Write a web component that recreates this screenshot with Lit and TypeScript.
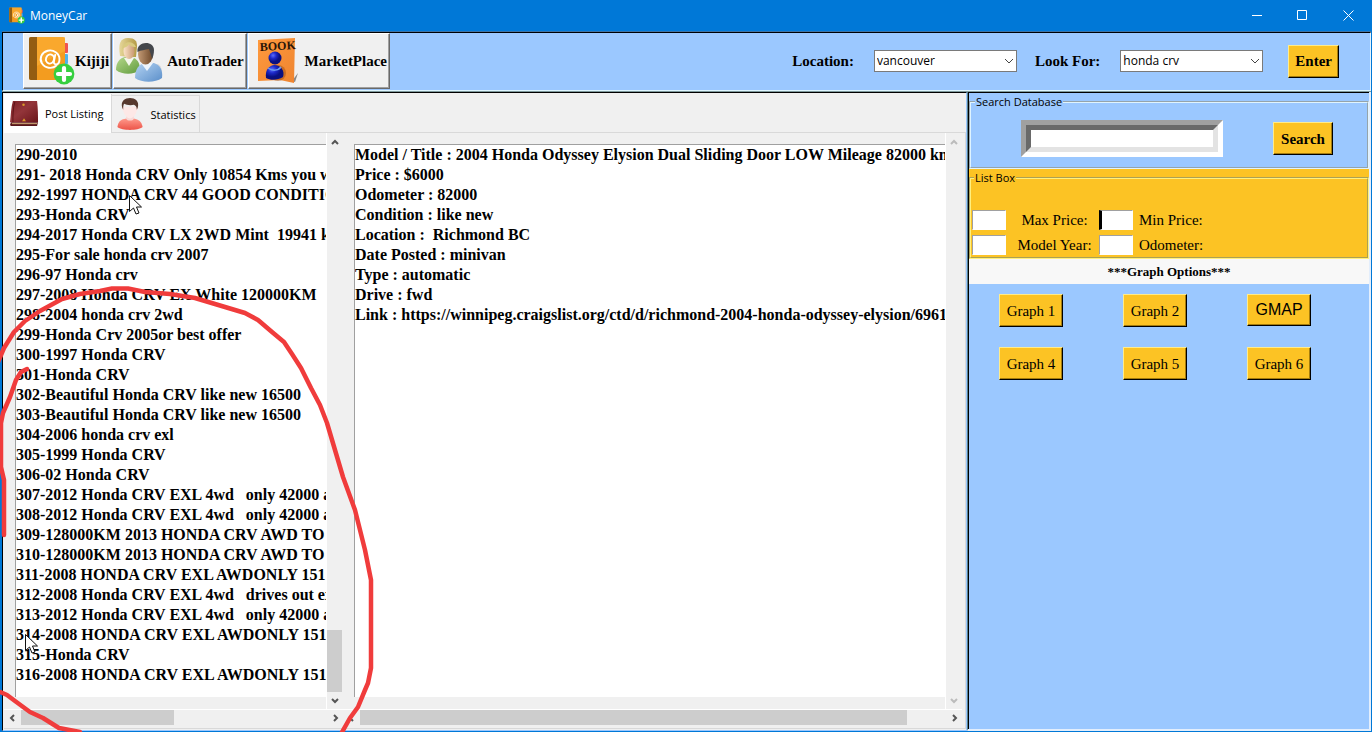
import { LitElement, html, css, svg } from "lit";
import { customElement, property } from "lit/decorators.js";

const posts = [
  "290-2010",
  "291- 2018 Honda CRV Only 10854 Kms you we",
  "292-1997 HONDA CRV 44 GOOD CONDITIO",
  "293-Honda CRV",
  "294-2017 Honda CRV LX 2WD Mint  19941 k",
  "295-For sale honda crv 2007",
  "296-97 Honda crv",
  "297-2008 Honda CRV EX White 120000KM",
  "298-2004 honda crv 2wd",
  "299-Honda Crv 2005or best offer",
  "300-1997 Honda CRV",
  "301-Honda CRV",
  "302-Beautiful Honda CRV like new 16500",
  "303-Beautiful Honda CRV like new 16500",
  "304-2006 honda crv exl",
  "305-1999 Honda CRV",
  "306-02 Honda CRV",
  "307-2012 Honda CRV EXL 4wd   only 42000 ac",
  "308-2012 Honda CRV EXL 4wd   only 42000 ac",
  "309-128000KM 2013 HONDA CRV AWD TO",
  "310-128000KM 2013 HONDA CRV AWD TO",
  "311-2008 HONDA CRV EXL AWDONLY 151",
  "312-2008 Honda CRV EXL 4wd   drives out ex",
  "313-2012 Honda CRV EXL 4wd   only 42000 ac",
  "314-2008 HONDA CRV EXL AWDONLY 151",
  "315-Honda CRV",
  "316-2008 HONDA CRV EXL AWDONLY 151",
];

const details = [
  "Model / Title : 2004 Honda Odyssey Elysion Dual Sliding Door LOW Mileage 82000 km",
  "Price : $6000",
  "Odometer : 82000",
  "Condition : like new",
  "Location :  Richmond BC",
  "Date Posted : minivan",
  "Type : automatic",
  "Drive : fwd",
  "Link : https://winnipeg.craigslist.org/ctd/d/richmond-2004-honda-odyssey-elysion/6961428",
];

const contactsArt = svg`
  <rect x="34" y="7" width="6" height="10" rx="1" fill="#ef5350"/>
  <rect x="34" y="18" width="6" height="10" rx="1" fill="#4fb3e8"/>
  <rect x="1" y="1" width="36" height="43" rx="2" fill="#f39c1f"/>
  <path d="M3 1h6v43H3a2 2 0 0 1-2-2V3a2 2 0 0 1 2-2z" fill="#935d12"/>
  <path d="M9 1h28v14L9 30z" fill="#ffb43c" opacity=".5"/>
  <g fill="none" stroke="#fff" stroke-width="1.9" stroke-linecap="round">
    <path d="M28.500 29.500a9.400 8.700 0 1 1 3-6.500c0 3.500-1.600 5.400-3.600 5.400-1.900 0-2.300-1.400-1.900-3.400l1.200-6"/>
    <ellipse cx="22" cy="23" rx="4" ry="4.600" transform="rotate(18 22 23)"/>
  </g>
  <circle cx="36" cy="38" r="10.400" fill="#35cf3f"/>
  <path d="M36 32v12M30 38h12" stroke="#fff" stroke-width="4.200" stroke-linecap="round"/>`;

const usersArt = svg`
  <defs>
    <linearGradient id="blond" x1="0" x2="1"><stop offset="0" stop-color="#e6d79a"/><stop offset="1" stop-color="#b39a45"/></linearGradient>
    <linearGradient id="skin" x1="0" x2="1"><stop offset="0" stop-color="#fbe3c8"/><stop offset="1" stop-color="#c99870"/></linearGradient>
    <linearGradient id="tan" x1="0" x2="1"><stop offset="0" stop-color="#c39a75"/><stop offset="1" stop-color="#6d4728"/></linearGradient>
    <linearGradient id="green" x1="0" y1="0" x2="1" y2="1"><stop offset="0" stop-color="#b5d88a"/><stop offset="1" stop-color="#5f9a3c"/></linearGradient>
    <linearGradient id="sky" x1="0" y1="0" x2="1" y2="1"><stop offset="0" stop-color="#b4d3f2"/><stop offset="1" stop-color="#5b8fca"/></linearGradient>
  </defs>
  <ellipse cx="41" cy="34" rx="5" ry="8" fill="#dcdcdc"/>
  <path d="M0 32c0-8 4-12 9-13l9 1c4 2 6 6 6 12-6 5-18 5-24 0z" fill="url(#green)"/>
  <path d="M8 20l5 8 5-8z" fill="#f3f7ec"/>
  <path d="M4 18C2 6 4 0 12 0c7 0 9 3 9 8l-1 11h-6z" fill="url(#blond)"/>
  <ellipse cx="13" cy="13" rx="5.500" ry="8" fill="url(#skin)"/>
  <path d="M6 11C7 3 17 2 20 9c-5 0-6-1-7-3-1 3-4 3-7 5z" fill="#d9ca80"/>
  <path d="M19 40c0-9 4-14 10-15h9c6 2 9 7 8 15-7 5-20 5-27 0z" fill="url(#sky)"/>
  <path d="M25 25l6 8 6-8z" fill="#eef5fc"/>
  <ellipse cx="29.500" cy="16" rx="7.500" ry="10.500" fill="url(#tan)"/>
  <path d="M21.500 14C20 3 38 2 38 12c0 4-1 7-2 9-1-5-2-7-3-10-4 1-8 1-11.500 3z" fill="#44474c"/>`;

const facesArt = svg`
  <defs>
    <linearGradient id="orange" x1="0" y1="0" x2="1" y2="1"><stop offset="0" stop-color="#ff9a3d"/><stop offset="1" stop-color="#ee8430"/></linearGradient>
    <radialGradient id="royal" cx=".35" cy=".3"><stop offset="0" stop-color="#5a6cff"/><stop offset=".5" stop-color="#1c28c8"/><stop offset="1" stop-color="#0a1080"/></radialGradient>
  </defs>
  <path d="M35 44l6-8-3 9z" fill="#888"/>
  <path d="M1 3L38 1l-1 45-14-3-22 1z" fill="url(#orange)"/>
  <ellipse cx="21" cy="36" rx="8" ry="8" fill="#a14e10" opacity=".5"/>
  <path d="M9 41c-1-7 2-12 8-13 7 0 11 6 9 12-5 3-12 4-17 1z" fill="url(#royal)"/>
  <path d="M11 31c4 3 10 3 13-1" stroke="#6d9cf0" stroke-width="1.500" fill="none"/>
  <circle cx="18" cy="21" r="6.500" fill="url(#royal)"/>
  <text x="3" y="14" class="booktext" transform="rotate(-3 3 14)">BOOK</text>`;

const ledgerArt = svg`
  <defs><linearGradient id="leather" x1="0" y1="0" x2="1" y2="1"><stop offset="0" stop-color="#7c2024"/><stop offset=".45" stop-color="#93353a"/><stop offset="1" stop-color="#6a1519"/></linearGradient></defs>
  <path d="M0 26l1 1h27l1-4H1z" fill="#58161a"/>
  <path d="M3 1h25c1 8 1 15 1 22H0C1 15 1 8 3 1z" fill="url(#leather)"/>
  <path d="M2 24.500h26" stroke="#d9b47c" stroke-width="1"/>
  <path d="M5 2C3 9 3 16 3 23" stroke="#5c1216" fill="none"/>
  <circle cx="14" cy="5" r="1.300" fill="#d99a2b"/><path d="M12.500 22l2-3 2 3z" fill="#d99a2b"/>`;

const personArt = svg`
  <defs><linearGradient id="coral" x1="0" y1="0" x2="0" y2="1"><stop offset="0" stop-color="#ff9a8c"/><stop offset="1" stop-color="#ec5347"/></linearGradient></defs>
  <path d="M0 30c1-7 4-8 9-9h8c5 1 8 3 9 9-5 4-21 4-26 0z" fill="url(#coral)"/>
  <path d="M9 16h8v5c-1 3-7 3-8 0z" fill="#f8d9d6"/>
  <path d="M5 9c-1 1 0 4 1 4 1 5 4 8 7 8s6-3 7-8c1 0 2-3 1-4z" fill="#fde8e6"/>
  <path d="M5 10C3 3 8 0 13 0s10 3 8 10l-1 2c0-3-1-4-3-5-4 1-8 0-10-1-1 1-1 3-1 6z" fill="#57392e"/>`;

@customElement("scroll-bar")
export class ScrollBar extends LitElement {
  @property() orientation = "vertical";
  @property({ type: Number }) start = 0;
  @property({ type: Number }) size = 0;
  @property({ type: Boolean }) idle = false;

  static styles = css`
    :host { display: block; background: #f0f0f0; min-width: 0; min-height: 0; }
    .bar { display: flex; flex-direction: column; width: 100%; height: 100%; }
    .bar.horizontal { flex-direction: row; }
    .arrow {
      flex: none; width: 16px; height: 17px; padding: 0; border: 0; background: none;
      display: grid; place-items: center; color: #555;
    }
    .horizontal .arrow { width: 17px; height: 16px; }
    .idle { color: #bcbcbc; }
    .track { flex: 1; display: flex; flex-direction: column; min-height: 0; }
    .horizontal .track { flex-direction: row; }
    .thumb { background: #cdcdcd; flex: none; width: 15px; }
    .horizontal .thumb { width: auto; height: 15px; }
    path { fill: none; stroke: currentColor; stroke-width: 2; }
  `;

  render() {
    const flat = this.orientation === "horizontal";
    const back = flat ? "M6 2L3 5l3 3" : "M2 7l3-3 3 3";
    const forth = flat ? "M4 2l3 3-3 3" : "M2 3l3 3 3-3";
    const color = this.idle ? "arrow idle" : "arrow";
    const lead = flat ? `width:${this.start}%` : `height:${this.start}%`;
    const extent = flat ? `width:${this.size}%` : `height:${this.size}%`;
    return html`<div class="bar ${this.orientation}">
      <button class=${color} aria-label="Scroll back"><svg width="10" height="10"><path d=${back} /></svg></button>
      <div class="track"><div style=${lead}></div>
        ${this.size ? html`<div class="thumb" style=${extent}></div>` : ""}</div>
      <button class=${color} aria-label="Scroll forward"><svg width="10" height="10"><path d=${forth} /></svg></button>
    </div>`;
  }
}

@customElement("app-root")
export class AppRoot extends LitElement {
  static styles = css`
    :host {
      --sky: #9bc8ff; --gold: #fcc324; --face: #f0f0f0; --line: #d9d9d9;
      --ui: "Open Sans", "Noto Sans", sans-serif;
      --serif: "Liberation Serif", "Times New Roman", serif;
      display: block; height: 100vh; position: relative; overflow: hidden;
      font: 16px/20px var(--serif); color: #000;
    }
    * { box-sizing: border-box; }
    .window {
      height: 100%; display: flex; flex-direction: column; background: #0078d7;
      padding: 0 1px 1px 2px;
    }
    .titlebar {
      flex: none; height: 32px; display: flex; align-items: center; padding-left: 7px;
      color: #fff; font: 12px/16px var(--ui); border-bottom: 1px solid #3c74a8;
    }
    .titlebar h1 { font: inherit; margin: 0 auto 0 5px; }
    .winbtn { width: 46px; height: 31px; padding: 0; border: 0; background: none; display: grid; place-items: center; }
    .winbtn path { stroke: #fff; fill: none; }
    .toolbar {
      flex: none; height: 59px; display: flex; align-items: center; justify-content: space-between;
      background: var(--sky); border: 1px solid #000; border-right: 1px solid #e3f4ff; border-bottom: 1px solid #dff6ff;
      padding: 0 31px 1px 20px;
    }
    .sites, .filters { display: flex; align-items: center; }
    .site {
      height: 56px; display: flex; align-items: center; padding: 0 2px 0 1px;
      background: var(--face); border: 1px solid; border-color: #fff #696969 #696969 #fff;
      box-shadow: inset -1px -1px #a0a0a0; font: bold 15px/20px var(--serif); color: #000; margin-right: 1px;
    }
    .booktext { font: bold 12px var(--serif); fill: #2b1608; }
    .filters label { font-weight: bold; font-size: 15px; }
    .combo { position: relative; margin: 0 18px 0 20px; width: 143px; height: 22px; }
    .combo select {
      width: 100%; height: 100%; appearance: none; border: 1px solid #7a7a7a; border-radius: 0; background: #fff;
      font: 12px/16px var(--ui); padding: 0 2px; color: #000;
    }
    .combo svg { position: absolute; right: 3px; top: 6px; pointer-events: none; }
    .combo path { stroke: #444; fill: none; }
    .gold {
      background: var(--gold); border: 1px solid; border-color: #ffec8b #000 #000 #ffec8b;
      box-shadow: inset -1px -1px #a47c0c; height: 33px; padding: 0 6px;
      font: 15px/20px var(--serif); color: #000; border-radius: 0; white-space: nowrap;
    }
    .strong { font-weight: bold; }
    .enter { margin-left: 7px; }
    .main { flex: 1; min-height: 0; display: flex; border-top: 1px solid #7f9a9c; }
    .listings {
      flex: 1; min-width: 0; display: flex; flex-direction: column; background: var(--face);
      border-top: 1px solid #000; border-left: 1px solid #000; border-right: 1px solid var(--sky);
      border-bottom: 1px solid var(--sky); padding: 1px 0 1px 1px;
    }
    .tabs { display: flex; align-items: flex-end; height: 39px; flex: none; }
    .tab {
      display: flex; align-items: center; border: 0; border-right: 1px solid var(--line); background: #fff; height: 39px;
      padding: 0 8px 0 6px; gap: 6px; font: 11px/16px var(--ui); color: #000; border-radius: 0; white-space: nowrap;
    }
    .tab.other { background: var(--face); height: 38px; border: 1px solid var(--line); border-left: 0; padding: 1px 3px 0 4px; }
    .tabfill { flex: 1; align-self: stretch; border-bottom: 1px solid var(--line); }
    .pane { flex: 1; min-height: 0; display: flex; border-right: 1px solid var(--line); border-bottom: 1px solid var(--line); padding: 0 3px 2px 0; }
    .frame { display: grid; grid-template: minmax(0, 1fr) 17px / minmax(0, 1fr) 17px; }
    .posts { width: 339px; flex: none; }
    .detail { flex: 1; min-width: 0; }
    .list {
      margin: 11px 0 12px 11px; padding: 0; list-style: none; background: #fff; overflow: hidden;
      border-top: 1px solid #a0a0a0; border-left: 1px solid #a0a0a0; font-weight: bold; white-space: pre;
    }
    .vertical { border-left: 1px solid #fff; }
    .horizontal { grid-column: 1 / 3; border-top: 1px solid #fff; }
    .side {
      width: 404px; flex: none; background: var(--sky); border-left: 1px solid #57808c; border-right: 2px solid #e3eefc;
      border-bottom: 2px solid #e3eefc; box-shadow: inset 1px 1px #000; padding: 1px 0 0 1px;
    }
    fieldset { margin: 0; border: 2px groove #dff4ff; min-width: 0; padding: 0 2px; }
    legend { font: 11px/18px var(--ui); padding: 0 1px; margin-left: 2px; }
    .search > .row { display: flex; align-items: center; height: 55px; padding: 0 32px 0 48px; justify-content: space-between; }
    .search { height: 76px; }
    .search .gold { width: 60px; }
    .bevel { border: 5px solid; border-color: #a0a0a0 #fff #fff #a0a0a0; }
    .bevel input {
      display: block; width: 192px; height: 27px; border: 5px solid; border-color: #696969 #e3e3e3 #e3e3e3 #696969;
      border-radius: 0; background: #fff; font: 16px/20px var(--serif); padding: 0 2px; outline: none;
    }
    .goldbox { background: var(--gold); }
    .goldbox fieldset { height: 90px; border-color: #fff07e; padding: 0 1px; }
    .fields { display: grid; grid-template-columns: 34px 93px 34px 1fr; row-gap: 5px; padding-top: 23px; align-items: center; }
    .fields label { text-align: center; font-size: 15px; padding-left: 4px; }
    .fields label.left { text-align: left; padding-left: 6px; }
    .fields input {
      width: 100%; height: 20px; border: 1px solid; border-color: #a0a0a0 #fff #fff #a0a0a0; border-radius: 0;
      background: #fff; padding: 0 2px; font: 15px/16px var(--serif); outline: none;
    }
    .fields .caret { border-left: 3px solid #000; }
    .options { margin: 0; background: #f8f8f8; font: bold 13px/25px var(--serif); text-align: center; }
    .graphs { display: grid; grid-template-columns: repeat(3, 124px); justify-items: center; row-gap: 20px; padding-top: 10px; }
    .graphs .gold { width: 64px; padding: 0; }
    .graphs .sans { font-family: "Liberation Sans", Arial, sans-serif; font-size: 16px; height: 32px; }
    .ink { position: absolute; left: 0; top: 0; pointer-events: none; }
    .stroke { fill: none; stroke: #f03c3c; stroke-width: 4.5; stroke-linecap: round; stroke-linejoin: round; }
    .pointer { fill: #fff; stroke: #111; stroke-width: 1; }
  `;

  private combo(id: string, label: string, value: string) {
    return html`<label for=${id}>${label}</label>
      <div class="combo"><select id=${id}><option>${value}</option></select>
        <svg width="10" height="10"><path d="M1 3l4 4 4-4" /></svg></div>`;
  }

  private list(rows: string[], label: string) {
    return html`<ul class="list" role="listbox" aria-label=${label}>${rows.map((r) => html`<li role="option">${r}</li>`)}</ul>`;
  }

  render() {
    return html`
      <div class="window">
        <header class="titlebar">
          <svg width="16" height="17" viewBox="0 0 47 49">${contactsArt}</svg>
          <h1>MoneyCar</h1>
          <button class="winbtn" aria-label="Minimize"><svg width="11" height="11"><path d="M1 5.500h10" /></svg></button>
          <button class="winbtn" aria-label="Maximize"><svg width="11" height="11"><path d="M.5 .5h9v9h-9z" /></svg></button>
          <button class="winbtn" aria-label="Close"><svg width="11" height="11"><path d="M.5 .5l10 10M10.500 .5l-10 10" /></svg></button>
        </header>
        <nav class="toolbar">
          <div class="sites">
            <button class="site"><svg width="50" height="50" viewBox="-3 0 50 50">${contactsArt}</svg>Kijiji</button>
            <button class="site"><svg width="52" height="47" viewBox="-1 0 52 47">${usersArt}</svg>AutoTrader</button>
            <button class="site"><svg width="55" height="48" viewBox="-7 0 55 48">${facesArt}</svg>MarketPlace</button>
          </div>
          <div class="filters">
            ${this.combo("location", "Location:", "vancouver")}
            ${this.combo("lookfor", "Look For:", "honda crv")}
            <button class="gold strong enter">Enter</button>
          </div>
        </nav>
        <div class="main">
          <section class="listings">
            <div class="tabs" role="tablist">
              <button class="tab" role="tab" aria-selected="true"><svg width="29" height="29" viewBox="0 0 30 28">${ledgerArt}</svg>Post Listing</button>
              <button class="tab other" role="tab"><svg width="28" height="33" viewBox="-1 0 28 34">${personArt}</svg>Statistics</button>
              <div class="tabfill"></div>
            </div>
            <div class="pane">
              <div class="frame posts">
                ${this.list(posts, "Posts")}
                <scroll-bar class="vertical" .start=${88.500} .size=${11.500}></scroll-bar>
                <scroll-bar class="horizontal" orientation="horizontal" .start=${0} .size=${50}></scroll-bar>
              </div>
              <div class="frame detail">
                ${this.list(details, "Details")}
                <scroll-bar class="vertical" idle></scroll-bar>
                <scroll-bar class="horizontal" orientation="horizontal" .start=${0} .size=${93.500}></scroll-bar>
              </div>
            </div>
          </section>
          <aside class="side">
            <fieldset class="search">
              <legend>Search Database</legend>
              <div class="row">
                <div class="bevel"><input type="text" aria-label="Search Database" /></div>
                <button class="gold strong">Search</button>
              </div>
            </fieldset>
            <div class="goldbox">
              <fieldset>
                <legend>List Box</legend>
                <div class="fields">
                  <input id="max" type="text" /><label for="max">Max Price:</label>
                  <input id="min" class="caret" type="text" /><label class="left" for="min">Min Price:</label>
                  <input id="year" type="text" /><label for="year">Model Year:</label>
                  <input id="odo" type="text" /><label class="left" for="odo">Odometer:</label>
                </div>
              </fieldset>
            </div>
            <h2 class="options">***Graph Options***</h2>
            <div class="graphs">
              <button class="gold">Graph 1</button><button class="gold">Graph 2</button><button class="gold sans">GMAP</button>
              <button class="gold">Graph 4</button><button class="gold">Graph 5</button><button class="gold">Graph 6</button>
            </div>
          </aside>
        </div>
      </div>
      <svg class="ink" width="380" height="732" aria-hidden="true">
        <path class="pointer" d="M129.500 195.500v16l4-3.500 2.500 6 3-1-2.500-6h5z" />
        <path class="pointer" d="M25.500 634.500v16l4-3.500 2.500 6 3-1-2.500-6h5z" />
        <path class="stroke" d="M-2 362L4 348 14 332 25 321 40 311 62 299 80 294 100 291 112 288.500 128 288.500 145 292 170 294 195 298 215 304 245 313 258 320 272 332 284 342 292 354 301 368 311 388 320 405 327 423 335 450 343 477 355 510 365 550 371 580V668L368 683 365 690 358 707 350 718 341 734" />
        <path class="stroke" d="M-2 691L7 695 15 701 30 712 43 718 59 728 80 732" />
        <path class="stroke" d="M27 369L21 372 16 380 10 397 3 413 1 423V467L4 480V535" />
      </svg>
    `;
  }
}
